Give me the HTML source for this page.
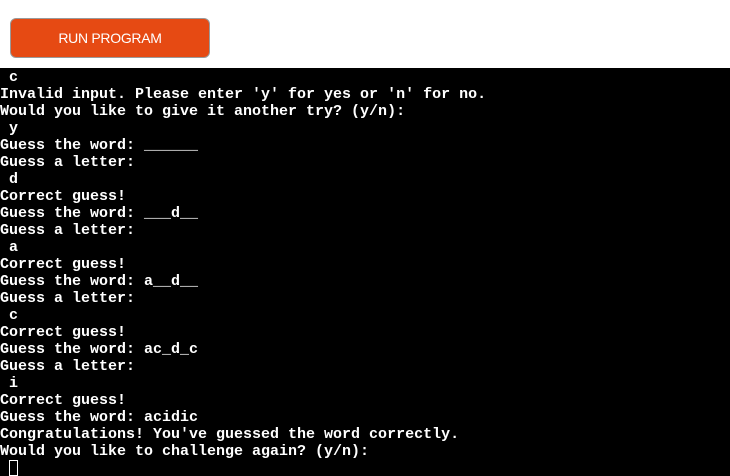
<html><head><style>
body{margin:0;width:730px;height:476px;overflow:hidden;background:#fff;font-family:"Liberation Sans",sans-serif}
.btn{position:absolute;left:10px;top:18px;width:198px;height:38px;background:#e64a13;border:1px solid #9a9a9a;border-radius:6px;color:#fff;font-size:14px;line-height:38px;text-align:center;letter-spacing:-0.3px}
.term{position:absolute;left:0;top:68px;width:730px;height:408px;background:#000;color:#fff;font-family:"Liberation Mono",monospace;font-weight:bold;font-size:15px;line-height:17px;white-space:pre;padding-top:1px;box-sizing:border-box;overflow:hidden}
.cur{display:inline-block;width:9px;height:16px;border:1px solid #fff;box-sizing:border-box;vertical-align:-4px}
</style></head><body>
<div class="btn">RUN PROGRAM</div>
<div class="term"> c
Invalid input. Please enter 'y' for yes or 'n' for no.
Would you like to give it another try? (y/n):
 y
Guess the word: ______
Guess a letter:
 d
Correct guess!
Guess the word: ___d__
Guess a letter:
 a
Correct guess!
Guess the word: a__d__
Guess a letter:
 c
Correct guess!
Guess the word: ac_d_c
Guess a letter:
 i
Correct guess!
Guess the word: acidic
Congratulations! You've guessed the word correctly.
Would you like to challenge again? (y/n):
 <span class="cur"></span></div>
</body></html>
